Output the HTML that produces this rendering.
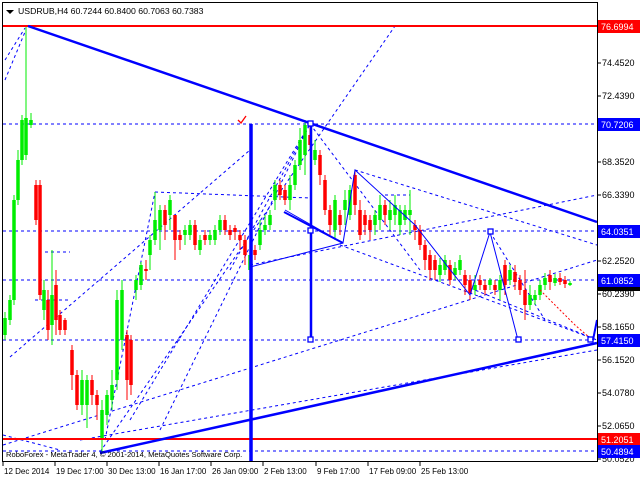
<!DOCTYPE html>
<html><head><meta charset="utf-8"><style>
html,body{margin:0;padding:0;background:#fff;width:640px;height:480px;overflow:hidden}
svg{display:block}
text{font-family:"Liberation Sans","DejaVu Sans",sans-serif}
</style></head><body>
<svg width="640" height="480" xmlns="http://www.w3.org/2000/svg">
<rect width="640" height="480" fill="#fff"/>
<g fill="none" stroke="#0000ff" stroke-width="1" stroke-dasharray="3,3">
<line x1="3" y1="124" x2="597" y2="124"/>
<line x1="3" y1="231" x2="597" y2="231"/>
<line x1="3" y1="280" x2="597" y2="280"/>
<line x1="3" y1="340" x2="597" y2="340"/>
<line x1="3" y1="451" x2="597" y2="451"/>
<line x1="10" y1="357" x2="250" y2="150"/>
<line x1="100" y1="452" x2="395" y2="26"/>
<line x1="3" y1="445" x2="597" y2="260"/>
<line x1="80" y1="440" x2="597" y2="350"/>
<line x1="250" y1="265" x2="597" y2="195"/>
<line x1="105" y1="440" x2="155" y2="192"/>
<line x1="155" y1="192" x2="310" y2="198"/>
<line x1="230" y1="270" x2="310" y2="124"/>
<line x1="130" y1="420" x2="310" y2="124"/>
<line x1="160" y1="430" x2="310" y2="124"/>
<line x1="355" y1="170" x2="597" y2="245"/>
<line x1="340" y1="245" x2="597" y2="340"/>
<line x1="310" y1="124" x2="420" y2="270"/>
<line x1="470" y1="288" x2="597" y2="340"/>
<line x1="490" y1="232" x2="545" y2="320"/>
<line x1="5" y1="60" x2="25" y2="28"/>
<line x1="5" y1="80" x2="25" y2="32"/>
<line x1="3" y1="435" x2="60" y2="450"/>
<line x1="385" y1="195" x2="410" y2="195"/>
<line x1="45" y1="252" x2="70" y2="252"/>
<line x1="35" y1="300" x2="70" y2="300"/>
</g>
<path fill="none" stroke="#00ee00" stroke-width="1" d="M5 312V340M10 295V325M14 195V305M18 150V205M22 115V165M26 26V160M31 113V128M44 280V320M52 250V345M82 370V415M87 375V428M102 400V452M107 390V425M112 370V410M117 290V390M122 280V350M136 275V300M141 262V290M150 235V270M155 192V245M160 205V250M170 195V230M185 225V245M190 220V240M200 235V255M210 230V245M215 225V245M220 215V235M250 245V285M260 220V250M265 215V235M270 210V230M275 180V210M290 175V210M295 160V190M300 128V170M305 120V175M315 140V165M335 195V240M345 190V225M350 185V220M375 210V235M380 195V230M390 200V230M395 195V225M400 205V235M405 205V225M410 190V235M440 258V282M445 255V275M455 262V280M460 255V275M475 275V295M490 278V290M500 275V300M510 265V285M530 285V310M535 290V305M540 280V300M545 273V290M555 274V286M570 281V286"/>
<path fill="none" stroke="#00ee00" stroke-width="3.5" d="M5 318V335M10 300V320M14 200V300M18 160V200M22 120V160M26 118V155M31 120V125M44 290V310M52 295V325M82 380V405M87 380V405M102 410V440M107 395V415M112 385V400M117 300V380M122 290V340M136 280V290M141 265V285M150 240V255M155 220V240M160 210V230M170 200V215M185 230V235M190 225V235M200 240V250M210 235V240M215 230V240M220 220V230M250 255V270M260 230V245M265 225V230M270 215V225M275 185V200M290 185V200M295 165V185M300 140V165M305 125V155M315 150V160M335 200V230M345 200V210M350 190V215M375 215V225M380 205V220M390 210V220M395 205V215M400 210V225M405 210V220M410 210V215M440 265V275M445 260V270M455 268V275M460 260V270M475 285V290M490 280V285M500 280V290M510 270V280M530 295V305M535 295V300M540 285V295M545 278V285M555 278V283M570 283V285"/>
<path fill="none" stroke="#ff0000" stroke-width="1" d="M36 180V225M40 180V300M48 290V340M56 270V335M60 310V335M65 318V335M72 345V390M77 370V410M92 375V405M97 390V420M127 330V400M131 335V395M146 260V280M165 205V240M175 215V260M180 230V250M195 220V250M205 230V245M225 215V235M230 225V240M235 225V240M240 230V250M245 235V265M255 245V260M280 180V200M285 185V205M310 125V150M320 150V185M325 175V215M330 205V235M340 210V235M355 170V215M360 200V240M365 210V235M370 215V240M385 200V225M415 220V240M420 225V250M425 240V270M430 250V280M435 255V280M450 260V285M465 270V295M470 275V300M480 275V290M485 280V295M495 280V295M505 260V295M515 265V290M520 275V295M525 270V320M550 270V290M560 273V285M565 276V288"/>
<path fill="none" stroke="#ff0000" stroke-width="3.5" d="M36 185V220M40 185V295M48 300V330M56 285V320M60 315V330M65 320V330M72 350V375M77 375V405M92 380V395M97 395V405M127 335V380M131 340V385M146 269V271M165 210V225M175 215V240M180 235V240M195 225V245M205 235V240M225 220V230M230 230V235M235 228V232M240 235V240M245 240V255M255 250V255M280 185V195M285 190V200M310 135V145M320 155V175M325 180V210M330 210V225M340 215V225M355 175V205M360 210V235M365 215V225M370 220V230M385 205V215M415 225V230M420 230V245M425 245V260M430 255V270M435 260V270M450 265V280M465 275V285M470 280V293M480 280V285M485 285V290M495 285V290M505 265V285M515 272V282M520 280V290M525 290V305M550 275V282M560 278V282M565 280V284"/>
<g fill="none" stroke="#0000ff" stroke-width="1">
<polyline points="285,210 343,243 355,170 415,225 470,295 490,232 518,340"/>
<line x1="250" y1="267" x2="343" y2="243"/>
</g>
<polyline points="540,290 560,310 575,325 590,338" fill="none" stroke="#ff0000" stroke-dasharray="2,2"/>
<line x1="3" y1="26" x2="597" y2="26" stroke="#ff0000" stroke-width="2"/>
<line x1="3" y1="439" x2="597" y2="439" stroke="#ff0000" stroke-width="2"/>
<line x1="28" y1="26" x2="597" y2="222" stroke="#0000ff" stroke-width="2.5"/>
<line x1="100" y1="453" x2="597" y2="343" stroke="#0000ff" stroke-width="2.5"/>
<line x1="284" y1="212" x2="343" y2="243" stroke="#0000ff" stroke-width="2"/>
<line x1="251" y1="124" x2="251" y2="461" stroke="#0000ff" stroke-width="3.5"/>
<line x1="311" y1="124" x2="311" y2="340" stroke="#0000ff" stroke-width="2.5"/>
<g fill="#fff" stroke="#0000ff" stroke-width="1.3">
<rect x="308" y="121" width="5" height="5"/><rect x="308" y="228" width="5" height="5"/><rect x="308" y="337" width="5" height="5"/>
<rect x="488" y="229" width="5" height="5"/><rect x="516" y="337" width="5" height="5"/><rect x="588" y="337" width="5" height="5"/>
</g>
<line x1="593" y1="340" x2="597" y2="320" stroke="#0000ff" stroke-width="2"/>
<path d="M238 120 l3 3 l5 -7" fill="none" stroke="#ff0000" stroke-width="1.3"/>
<rect x="2.5" y="2.5" width="595" height="459" fill="none" stroke="#000" stroke-width="1"/>
<path d="M6 10 l8 0 l-4 4z" fill="#000"/>
<text x="18" y="14" font-size="8.7">USDRUB,H4  60.7244 60.8400 60.7063 60.7383</text>
<text x="6" y="457" font-size="7.6">RoboForex - MetaTrader 4, © 2001-2014, MetaQuotes Software Corp.</text>
<g stroke="#000">
<path d="M597 63h4M597 96h4M597 162h4M597 195h4M597 261h4M597 294h4M597 327h4M597 360h4M597 393h4M597 426h4M597 459h4"/>
<path d="M3 461v5M55 461v5M107 461v5M159 461v5M211 461v5M263 461v5M316 461v5M368 461v5M420 461v5"/>
</g>
<g fill="#000" font-size="9">
<text x="602" y="66">74.4520</text>
<text x="602" y="99">72.4390</text>
<text x="602" y="165">68.3520</text>
<text x="602" y="198">66.3390</text>
<text x="602" y="264">62.2520</text>
<text x="602" y="297">60.2390</text>
<text x="602" y="330">58.1650</text>
<text x="602" y="363">56.1520</text>
<text x="602" y="396">54.0780</text>
<text x="602" y="429">52.0650</text>
<text x="602" y="462">50.0520</text>
<rect x="598" y="283" width="42" height="8"/>
</g>
<rect x="598" y="20" width="42" height="13" fill="#ff0000"/>
<rect x="598" y="118" width="42" height="13" fill="#0000ff"/>
<rect x="598" y="225" width="42" height="13" fill="#0000ff"/>
<rect x="598" y="274" width="42" height="13" fill="#0000ff"/>
<rect x="598" y="334" width="42" height="13" fill="#0000ff"/>
<rect x="598" y="433" width="42" height="13" fill="#ff0000"/>
<rect x="598" y="445" width="42" height="13" fill="#0000ff"/>
<g fill="#fff" font-size="9">
<text x="601" y="30">76.6994</text>
<text x="601" y="128">70.7206</text>
<text x="601" y="235">64.0351</text>
<text x="601" y="284">61.0852</text>
<text x="601" y="344">57.4150</text>
<text x="601" y="443">51.2051</text>
<text x="601" y="455">50.4894</text>
</g>
<g fill="#000" font-size="8">
<text x="4" y="474">12 Dec 2014</text>
<text x="56" y="474">19 Dec 17:00</text>
<text x="108" y="474">30 Dec 13:00</text>
<text x="160" y="474">16 Jan 17:00</text>
<text x="212" y="474">26 Jan 09:00</text>
<text x="264" y="474">2 Feb 13:00</text>
<text x="317" y="474">9 Feb 17:00</text>
<text x="369" y="474">17 Feb 09:00</text>
<text x="421" y="474">25 Feb 13:00</text>
</g>
</svg>
</body></html>
